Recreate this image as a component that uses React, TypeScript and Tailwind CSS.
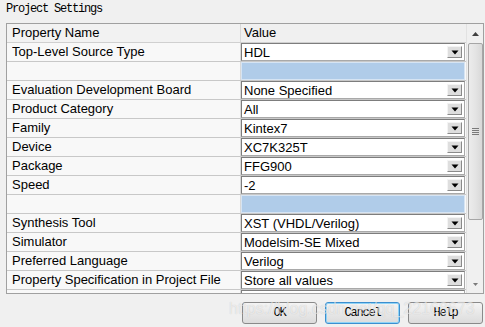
import React from 'react';

type Row = { name: string; value?: string };

const rows: Row[] = [
  { name: 'Top-Level Source Type', value: 'HDL' },
  { name: '' },
  { name: 'Evaluation Development Board', value: 'None Specified' },
  { name: 'Product Category', value: 'All' },
  { name: 'Family', value: 'Kintex7' },
  { name: 'Device', value: 'XC7K325T' },
  { name: 'Package', value: 'FFG900' },
  { name: 'Speed', value: '-2' },
  { name: '' },
  { name: 'Synthesis Tool', value: 'XST (VHDL/Verilog)' },
  { name: 'Simulator', value: 'Modelsim-SE Mixed' },
  { name: 'Preferred Language', value: 'Verilog' },
  { name: 'Property Specification in Project File', value: 'Store all values' },
  { name: '', value: '' },
];

const sans = "font-['Liberation_Sans',Arial,sans-serif]";
const mono = "font-['Liberation_Mono','Courier_New',monospace]";

function DropArrow() {
  return (
    <div className="mr-[2px] flex h-[12px] w-[15px] items-center justify-center border border-t-[#f4f4f4] border-l-[#f4f4f4] border-r-[#8a8a8a] border-b-[#8a8a8a] bg-[#dedede]">
      <svg width="8" height="5" viewBox="0 0 8 5">
        <path d="M0.5 0.5h7L4 4.5z" fill="#000" />
      </svg>
    </div>
  );
}

function ValueCell({ value }: { value?: string }) {
  if (value === undefined) {
    return <div className="h-full w-[224px] border border-[#d6e4f3] bg-[#b0cce9]" />;
  }
  return (
    <div className="flex h-full w-[224px] items-center border border-t-[#7d7d7d] border-l-[#7d7d7d] border-r-[#a9a9a9] border-b-[#a9a9a9] bg-white">
      <div className="h-[15px] flex-1 overflow-hidden pl-[2px]">
        <div className={`${sans} text-[13px] leading-[16px] text-black`}>{value}</div>
      </div>
      <DropArrow />
    </div>
  );
}

function Scrollbar() {
  return (
    <div className="flex w-[17px] flex-col border-l border-[#e2e2e2] bg-[#f0f0f0]">
      <div className="flex h-[19px] items-center justify-center">
        <svg width="7" height="4" viewBox="0 0 7 4">
          <path d="M3.5 0L7 4H0z" fill="#404040" />
        </svg>
      </div>
      <div className="mx-auto flex h-[177px] w-[15px] items-center justify-center rounded-[2px] border border-[#a6a6a6] bg-gradient-to-r from-[#ececec] via-[#e4e4e4] to-[#d8d8d8]">
        <div className="flex flex-col gap-[1px]">
          <div className="h-[1px] w-[7px] bg-[#7a7a7a]" />
          <div className="h-[1px] w-[7px] bg-[#7a7a7a]" />
          <div className="h-[1px] w-[7px] bg-[#7a7a7a]" />
          <div className="h-[1px] w-[7px] bg-[#7a7a7a]" />
        </div>
      </div>
      <div className="flex-1" />
      <div className="flex h-[17px] items-center justify-center">
        <svg width="5" height="3" viewBox="0 0 5 3">
          <path d="M0 0h5L2.5 3z" fill="#7a7a7a" />
        </svg>
      </div>
    </div>
  );
}

function Button({ label, focused }: { label: string; focused?: boolean }) {
  return (
    <button
      className={`flex h-[22px] w-[75px] items-center justify-center rounded-[3px] border bg-gradient-to-b from-[#f4f4f4] to-[#dcdcdc] ${mono} text-[12px] tracking-[-1.2px] text-black ${
        focused ? 'border-[#3c8fcf] shadow-[inset_0_0_0_1px_#8fd3f6]' : 'border-[#8a8a8a]'
      }`}
    >
      {label}
    </button>
  );
}

export default function App() {
  return (
    <div className="relative h-[327px] w-[485px] overflow-hidden bg-[#f0f0f0]">
      <div className={`h-[23px] pl-[6px] pt-[2px] ${mono} text-[12px] leading-[14px] tracking-[-1.2px] text-black`}>
        Project Settings
      </div>

      <div className="ml-[6px] flex h-[271px] w-[478px] overflow-hidden border border-[#a0a0a0] bg-white">
        <div className="flex w-[459px] flex-col">
          <div className="flex h-[19px] shrink-0 border-b border-[#d0d0d0] bg-[#f0f0f0]">
            <div className="w-[234px] border-r border-[#d8d8d8] bg-[#f2f2f2] pl-[5px]">
              <div className={`${sans} text-[13px] leading-[18px] text-black`}>Property Name</div>
            </div>
            <div className="flex-1 pl-[3px]">
              <div className={`${sans} text-[13px] leading-[18px] text-black`}>Value</div>
            </div>
          </div>
          {rows.map((r, i) => (
            <div key={i} className="flex h-[19px] shrink-0 border-b border-[#c8c8c8] bg-[#f8f8f8]">
              <div className="w-[234px] border-r border-[#d8d8d8] pl-[5px] pt-[1px]">
                <div className="h-[15px] overflow-hidden">
                  <div className={`${sans} text-[13px] leading-[16px] text-black`}>{r.name}</div>
                </div>
              </div>
              <div className="flex-1">
                <ValueCell value={r.value} />
              </div>
            </div>
          ))}
        </div>
        <Scrollbar />
      </div>

      <div className="mt-[8px] flex justify-end gap-[8px] pr-[2px]">
        <Button label="OK" />
        <Button label="Cancel" focused />
        <Button label="Help" />
      </div>

      <div
        className={`pointer-events-none absolute left-[229px] top-[299px] ${sans} text-[16px] leading-[20px] text-white/60 [text-shadow:0_0_1px_rgba(0,0,0,0.18)]`}
      >
        https://blog.csdn.net/qq_22168673
      </div>
    </div>
  );
}
